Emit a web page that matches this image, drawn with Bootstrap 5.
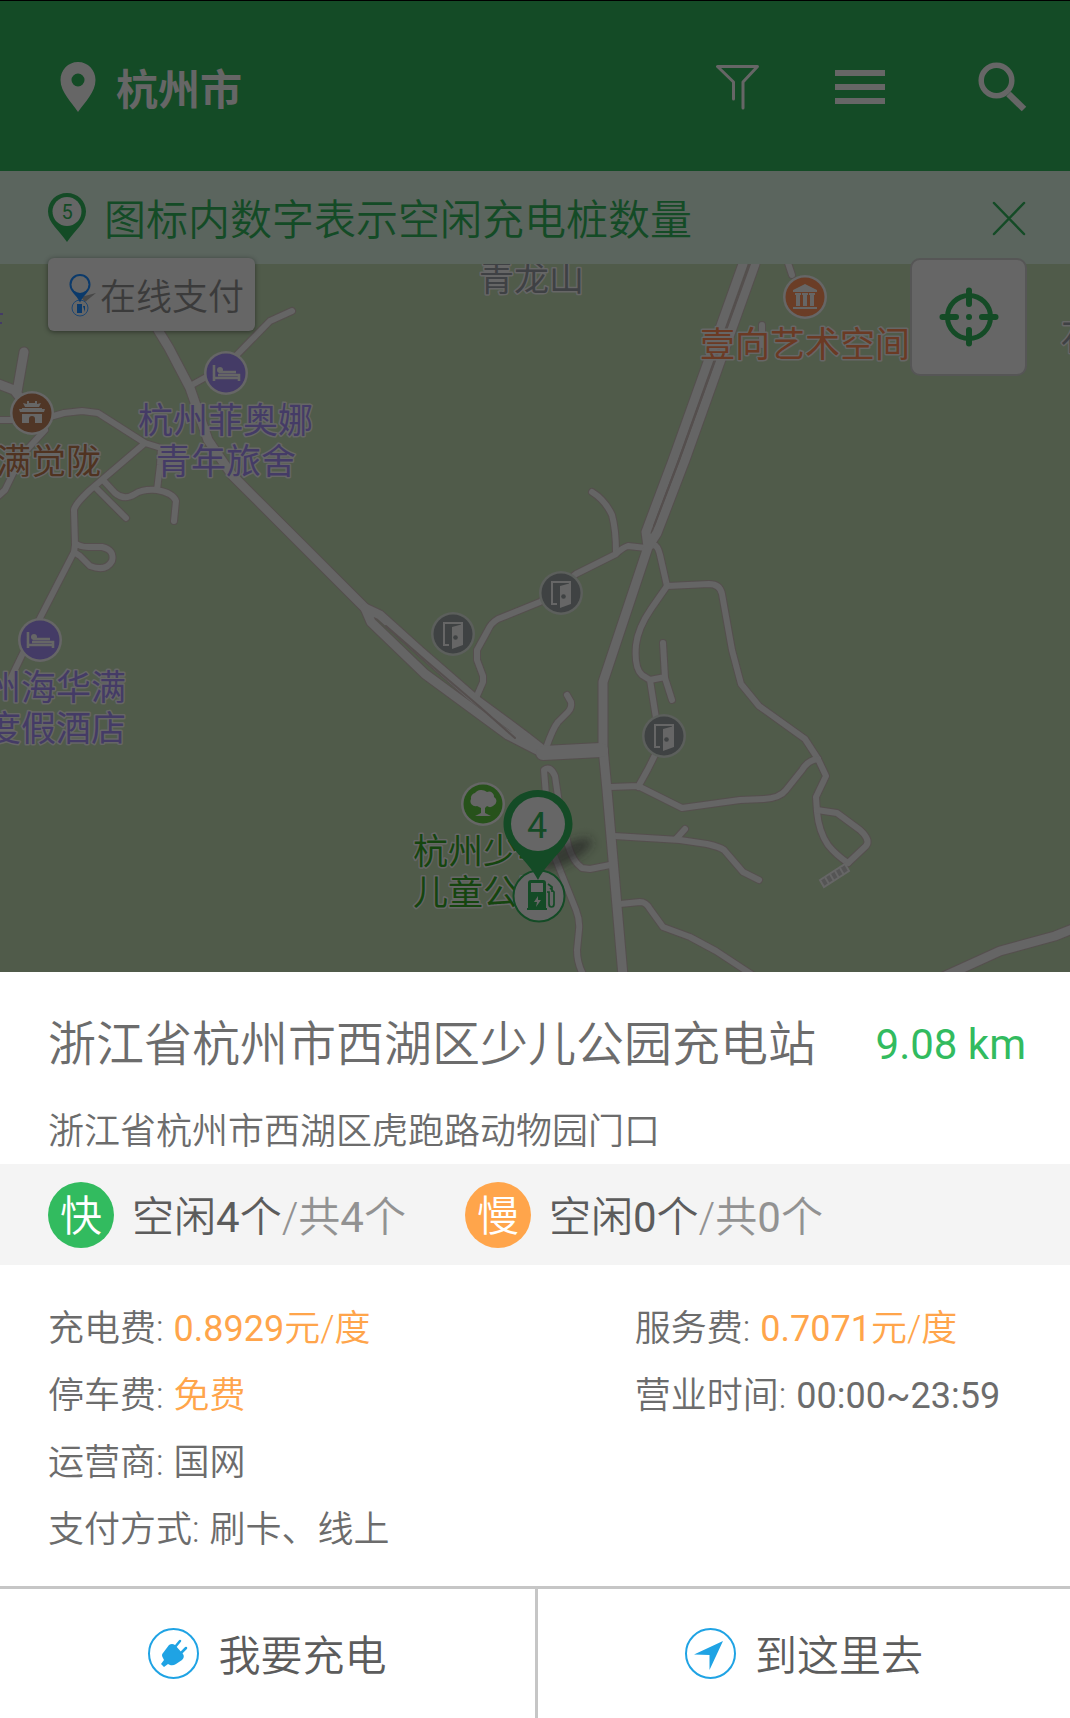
<!DOCTYPE html>
<html lang="zh-CN">
<head>
<meta charset="utf-8">
<meta name="viewport" content="width=device-width, initial-scale=1">
<title>充电站</title>
<link rel="stylesheet" href="https://cdn.jsdelivr.net/npm/bootstrap@5.3.0/dist/css/bootstrap.min.css">
<style>
  :root { --dim-green: #144b26; --dim-white: #666; --go: #32bb5f; --amber: #ffa54b; --edge-l: 48px; --edge-r: 44px; --text-weight: 350; }
  body { font-family: Roboto, "Noto Sans CJK SC", sans-serif; font-weight: var(--text-weight); font-size: 36px; color: #6c6c6c; background: #fff; line-height: 48px; }
  .latin { font-weight: 400; }
  .label-text { padding-top: 7px; }
  .plain-btn { background: none; border: 0; padding: 0; color: inherit; line-height: 1; }
  .plain-btn svg, .city svg { display: block; }
  .topbar { background: var(--dim-green); color: var(--dim-white); border-top: 1px solid #000; height: 171px; padding: 2px 43px 0 60px; }
  .city { font-size: 42px; font-weight: 700; gap: 20px; }
  .tools { gap: 76px; }
  .tools .find { margin-left: 17px; }
  .notice { background: #5b655e; color: var(--dim-green); height: 93px; padding: 0 var(--edge-r) 0 var(--edge-l); font-size: 42px; }
  .notice-text { gap: 18px; }
  .map-area { background: #505b4a; min-height: 400px; }
  .map-canvas { position: absolute; inset: 0; width: 100%; height: 100%; font-size: 35px; font-weight: 400; }
  .pay-chip { position: absolute; top: -6px; left: var(--edge-l); height: 73px; padding: 0 11px 0 21px; gap: 4px; font-size: 36px; font-weight: var(--text-weight); background: var(--dim-white); color: #3b3b3b; border: 0; border-radius: 6px; box-shadow: 0 1px 5px rgba(0,0,0,.45); }
  .locate { position: absolute; top: -6px; right: 43px; width: 117px; height: 118px; background: var(--dim-white); color: var(--dim-green); border: 2px solid #565656; border-radius: 10px; padding: 0; }
  .sheet-head { padding: 43px var(--edge-r) 8px var(--edge-l); }
  .station { font-size: 48px; font-weight: var(--text-weight); line-height: 60px; }
  .distance { font-size: 42px; line-height: 60px; color: var(--go); }
  .address { margin-top: 33px; }
  .piles { background: #f4f4f4; height: 101px; padding: 0 var(--edge-r) 0 var(--edge-l); gap: 59px; font-size: 42px; color: #5c5c5c; }
  .pile { gap: 18px; }
  .disc { width: 66px; height: 66px; line-height: 70px; border-radius: 50%; color: #fff; text-align: center; }
  .fast { background: var(--go); }
  .slow { background: var(--amber); }
  .total { color: #929292; }
  .facts { padding: 31px var(--edge-r) 22px var(--edge-l); line-height: 67px; }
  .facts-left { flex: 0 0 60%; }
  .facts dt, .facts dd { font-weight: var(--text-weight); margin: 0; }
  .facts dd.latin { font-weight: 400; }
  .facts dl > div { gap: 10px; }
  .price { color: var(--amber); }
  .actions { border-top: 3px solid #c6c6c6; height: 132px; }
  .act { flex: 0 0 50%; background: none; border: 0; font-size: 42px; font-weight: var(--text-weight); color: #5c5c5c; gap: 19px; }
  .act + .act { border-left: 3px solid #c6c6c6; }
</style>
<script src="https://cdn.jsdelivr.net/npm/bootstrap@5.3.0/dist/js/bootstrap.bundle.min.js"></script>
</head>
<body class="d-flex flex-column min-vh-100">

<header class="topbar d-flex align-items-center justify-content-between">
  <button type="button" class="plain-btn city d-flex align-items-center">
    <svg width="36" height="50" viewBox="0 0 36 50" fill="currentColor" aria-hidden="true"><path fill-rule="evenodd" d="M18 0C8 0 .5 8 .5 18c0 12 11 22 17.500 32C25 40 35.500 30 35.500 18 35.500 8 28 0 18 0zm0 11.500a6.500 6.500 0 1 1 0 13 6.500 6.500 0 0 1 0-13z"/></svg>
    <span class="label-text">杭州市</span>
  </button>
  <div class="tools d-flex align-items-center">
    <button type="button" class="plain-btn" aria-label="筛选">
      <svg width="43" height="50" viewBox="0 0 43 50" fill="none" stroke="currentColor" stroke-width="3" stroke-linecap="round" stroke-linejoin="round" aria-hidden="true"><path d="M17.500 37V20L1.500 4.500h40L27 20v26"/></svg>
    </button>
    <button type="button" class="plain-btn" aria-label="菜单">
      <svg width="50" height="34" viewBox="0 0 50 34" fill="currentColor" aria-hidden="true"><path d="M0 0h50v6H0zM0 14h50v6H0zM0 28h50v6H0z"/></svg>
    </button>
    <button type="button" class="plain-btn find" aria-label="搜索">
      <svg width="49" height="50" viewBox="0 0 49 50" fill="none" stroke="currentColor" aria-hidden="true"><circle cx="18.500" cy="18.500" r="15.300" stroke-width="5.500"/><path d="M30.500 32L46 47" stroke-width="6.500"/></svg>
    </button>
  </div>
</header>

<div class="notice d-flex align-items-center justify-content-between">
  <div class="notice-text d-flex align-items-center">
    <svg width="38" height="49" viewBox="0 0 38 49" aria-hidden="true"><path d="M19 0C8.500 0 0 8 0 18.500 0 30 11 37 19 49c8-12 19-19 19-30.500C38 8 29.500 0 19 0z" fill="#144b26"/><circle cx="19" cy="18.500" r="14.500" fill="#666"/><text x="19" y="26" text-anchor="middle" font-size="20" font-weight="400" fill="#144b26">5</text></svg>
    <span class="label-text">图标内数字表示空闲充电桩数量</span>
  </div>
  <button type="button" class="plain-btn" aria-label="关闭">
    <svg width="34" height="36" viewBox="0 0 34 36" fill="none" stroke="currentColor" stroke-width="2.500" stroke-linecap="round" aria-hidden="true"><path d="M2 3l30 31M32 3L2 34"/></svg>
  </button>
</div>

<main class="map-area position-relative flex-grow-1">
  <svg class="map-canvas" viewBox="0 264 1070 708" preserveAspectRatio="xMidYMid slice" role="img" aria-label="地图">
    <defs>
      <g id="small-roads">
        <path d="M592 492Q605 500 612 515Q616 530 616 552"/>
        <path d="M646 548L628 546Q622 548 616 554L576 574L540 602L498 619Q491 623 488 630L477 650V660L483 676V682L476 698"/>
        <path d="M567 695L571 702Q572 708 568 712L558 722Q553 728 546 748"/>
        <path d="M648 547L654 545Q658 546 660 555L667 586L709 584Q720 584 722 594L732 650L741 684L759 706L805 739L818 759L826 776L816 797L817 812Q819 832 828 845Q836 855 848 863"/>
        <path d="M817 810L837 813L860 830Q871 840 866 846L848 863"/>
        <path d="M667 586L651 609Q638 628 636 645Q634 668 642 675L650 680L665 677M663 643L665 678L672 700M650 680L656 718L664 736L652 761L648 769L638 787M610 787L638 786L682 808L740 800L764 799Q780 798 786 790L802 770Q808 760 818 759"/>
        <path d="M614 836L680 840L707 844Q720 847 724 850L743 872L759 880M676 839L685 829"/>
        <path d="M620 904L640 902Q646 902 650 909L663 927L690 937L716 951L754 976"/>
        <path d="M546 795L544 770Q550 765 555 776L560 810L568 845Q573 862 582 868L590 869L610 865M552 850L576 910Q580 920 579 930L577 950Q577 964 584 976"/>
        <path d="M292 311L270 321L226 366L190 386M50 417L64 413L82 411L98 413L145 443L161 448L160 465L157 490M145 443L90 490Q75 504 74 510L75 545L74 552L39 620L8 684M103 480L115 493Q124 501 135 494Q142 489 157 490Q173 493 176 501L174 521M95 487L126 518M75 543Q80 547 88 547H102Q115 550 112 561Q106 572 90 566L80 556L74 552M45 430L22 455L5 490L-5 499M-4 420H30M787 260L792 275M762 325V345"/>
      </g>
      <g id="big-roads">
        <path d="M158 330L169 348L190 388L208 440L232 475L365 608"/>
        <path d="M365 608L380 615L420 651L475 699L525 736L543 750M365 608L371 622L425 674L508 735L543 753"/>
        <path d="M743 264L673 460L646 532L648 547M755 264L685 460L657 533L648 547L603 682V748L607 790L623 976"/>
        <path d="M945 976L1000 951L1055 936L1075 928M24 352L17 392M-4 383L14 390L30 410"/>
      </g>
      <g id="bed-sign"><circle r="22" fill="#666"/><circle r="19.500" fill="#443b66"/><path d="M-12-8v16M-12 5h25M13 8V2H-8M-7-1h17" fill="none" stroke="#666" stroke-width="2.600"/><circle cx="-6" cy="-3" r="3" fill="#666"/></g>
      <g id="door-sign"><circle r="22" fill="#5c5f5c"/><circle r="19.500" fill="#3f4243"/><path d="M-4 11h-5v-22H9v4" fill="none" stroke="#666" stroke-width="2"/><path d="M-1-7L10-10V11L-1 15z" fill="#666"/><circle cx="2.500" cy="3.500" r="2.300" fill="#3f4243"/></g>
      <filter id="soft" x="-50%" y="-150%" width="200%" height="400%"><feGaussianBlur stdDeviation="5"/></filter>
    </defs>
    <g fill="none" stroke-linecap="round" stroke-linejoin="round">
      <g stroke="#554f4e"><use href="#small-roads" stroke-width="8"/><use href="#big-roads" stroke-width="11"/><path d="M543 753L601 750" stroke-width="16"/></g>
      <g stroke="#656565"><use href="#small-roads" stroke-width="6"/><use href="#big-roads" stroke-width="9"/><path d="M543 753L601 750" stroke-width="14"/></g>
      <path d="M750 264L679 460L654 526M386 626L425 660L480 707L515 738" stroke="#554f4e" stroke-width="2"/>
    </g>
    <path d="M820 880L845 864L849 871L824 887z" fill="#555" stroke="#666" stroke-width="2"/>
    <path d="M825 877l4 7M830 874l4 7M835 871l4 7M840 868l4 7" stroke="#666" stroke-width="2"/>
    <path d="M0 314h3M0 323h2" stroke="#443b66" stroke-width="2"/>

    <use href="#bed-sign" x="226" y="373"/>
    <use href="#bed-sign" x="40" y="640"/>
    <use href="#door-sign" x="453" y="634"/>
    <use href="#door-sign" x="561" y="593"/>
    <use href="#door-sign" x="664" y="736"/>
    <g transform="translate(32 413)"><circle r="22" fill="#666"/><circle r="19.500" fill="#503626"/><path d="M-9-10L-5-9V-12h2v2h6v-2h2v3l4-1-2 4H-7zM-13-4h26l-1 3H-12zM-10-5h20v2h-20zM-10 1h20v9H3V6A3 3 0 0 0-3 6v4h-7z" fill="#666"/></g>
    <g transform="translate(805 297)"><circle r="22" fill="#666"/><circle r="19.500" fill="#6b3d26"/><path d="M0-13L12-7v2h-24v-2zM-10-4h6v2h-1V9h-4V-2h-1zM-3-4h6v2H2V9h-4V-2h-1zM4-4h6v2H9V9H5V-2H4zM-12 10h24v2h-24z" fill="#666"/></g>
    <g transform="translate(483 804)"><circle r="22" fill="#666"/><circle r="19.500" fill="#27521b"/><path d="M-8 12l6-3V4l-4-2a5 5 0 0 1-6-7a5 5 0 0 1 4-6a7 5 0 0 1 12-1a5 5 0 0 1 7 5a5 5 0 0 1-1 9a5 5 0 0 1-6 0l-2 2v5l6 3z" fill="#666"/></g>

    <g paint-order="stroke" stroke="#666" stroke-width="3" stroke-linejoin="round">
      <g fill="#443b66">
        <text x="138" y="433">杭州菲奥娜</text><text x="156" y="474">青年旅舍</text>
        <text x="-14" y="700">州海华满</text><text x="-14" y="741">度假酒店</text>
      </g>
      <text x="-4" y="474" fill="#503321">满觉陇</text>
      <text x="479" y="291" fill="#3f4144">青龙山</text>
      <text x="700" y="357" fill="#6b3a24">壹向艺术空间</text>
      <text x="1061" y="350" fill="#3f4144">石</text>
      <g fill="#15450f"><text x="413" y="864">杭州少年</text><text x="413" y="905">儿童公园</text></g>
    </g>

    <ellipse cx="566" cy="854" rx="29" ry="9" transform="rotate(-28 566 854)" fill="#222" opacity=".6" filter="url(#soft)"/>
    <circle cx="539" cy="896" r="25.500" fill="#666" stroke="#144b26" stroke-width="2"/>
    <path fill="#144b26" fill-rule="evenodd" d="M531 880h12q3 0 3 3v25h1v2h-20v-2h1v-25q0-3 3-3zm0 3v9h12v-9zm7 13l-4 6h3l-1 5 5-7h-3z"/>
    <path d="M547 892h2v12q0 3 2.500 3t2.500-3v-12l-4-4M548 884l4 3v5" fill="none" stroke="#144b26" stroke-width="1.700"/>
    <path d="M538 790c-20 0-34.500 15-34.500 34 0 22 22.500 33 34.500 56 12-23 34.500-34 34.500-56 0-19-14.500-34-34.500-34z" fill="#144b26"/>
    <circle cx="538" cy="824" r="27" fill="#666"/>
    <text x="537" y="838" text-anchor="middle" font-size="36" fill="#144b26">4</text>
  </svg>

  <button type="button" class="pay-chip d-flex align-items-center">
    <svg width="27" height="44" viewBox="0 0 27 44" aria-hidden="true"><path d="M12 24l15-4-11 9z" fill="#333" opacity=".6"/><circle cx="11" cy="35" r="8" fill="none" stroke="#1c4672"/><path d="M8 31h5v9H8zM14 33h2v6" fill="#0b3a6b"/><path d="M11 1C5 1 .5 5.500 .5 11.500c0 7 7 10 10.500 18 3.500-8 10.500-11 10.500-18C21.500 5.500 17 1 11 1z" fill="#0b3a6b"/><circle cx="11" cy="11.500" r="8.500" fill="#666"/></svg>
    <span class="label-text">在线支付</span>
  </button>
  <button type="button" class="locate d-flex align-items-center justify-content-center" aria-label="定位">
    <svg width="60" height="60" viewBox="0 0 60 60" fill="none" stroke="currentColor" stroke-linecap="round" aria-hidden="true"><circle cx="30" cy="30" r="21.500" stroke-width="5"/><path d="M30 3.500V17M30 43v13.500M3.500 30H17M43 30h13.500M30 30h.01" stroke-width="6"/></svg>
  </button>
</main>

<section>
  <div class="sheet-head">
    <div class="d-flex justify-content-between align-items-center">
      <h1 class="station m-0">浙江省杭州市西湖区少儿公园充电站</h1>
      <span class="distance latin text-nowrap">9.08 km</span>
    </div>
    <p class="address mb-0">浙江省杭州市西湖区虎跑路动物园门口</p>
  </div>

  <div class="piles d-flex align-items-center">
    <div class="pile d-flex align-items-center"><span class="disc fast">快</span><span class="label-text">空闲<span class="latin">4</span>个<span class="total">/共<span class="latin">4</span>个</span></span></div>
    <div class="pile d-flex align-items-center"><span class="disc slow">慢</span><span class="label-text">空闲<span class="latin">0</span>个<span class="total">/共<span class="latin">0</span>个</span></span></div>
  </div>

  <div class="facts d-flex">
    <dl class="facts-left m-0">
      <div class="d-flex"><dt>充电费:</dt><dd class="price"><span class="latin">0.8929</span>元/度</dd></div>
      <div class="d-flex"><dt>停车费:</dt><dd class="price">免费</dd></div>
      <div class="d-flex"><dt>运营商:</dt><dd>国网</dd></div>
      <div class="d-flex"><dt>支付方式:</dt><dd>刷卡、线上</dd></div>
    </dl>
    <dl class="m-0 text-nowrap">
      <div class="d-flex"><dt>服务费:</dt><dd class="price"><span class="latin">0.7071</span>元/度</dd></div>
      <div class="d-flex"><dt>营业时间:</dt><dd class="latin">00:00~23:59</dd></div>
    </dl>
  </div>

  <div class="actions d-flex">
    <button type="button" class="act d-flex align-items-center justify-content-center">
      <svg width="51" height="51" viewBox="0 0 51 51" aria-hidden="true"><circle cx="25.500" cy="25.500" r="24.500" fill="none" stroke="#1fa3e4" stroke-width="2"/><path d="M21 17q3-2 6 0l8 9q2 3-1 6l-6 4q-3 2-6 1l-2-1-4 3-3-3 3-4-1-2q-2-3 0-5z" fill="#1fa3e4"/><path d="M27 19l5-6M33 25l5-5" stroke="#1fa3e4" stroke-width="2.500" stroke-linecap="round"/></svg>
      <span class="label-text">我要充电</span>
    </button>
    <button type="button" class="act d-flex align-items-center justify-content-center">
      <svg width="51" height="51" viewBox="0 0 51 51" aria-hidden="true"><circle cx="25.500" cy="25.500" r="24.500" fill="none" stroke="#1fa3e4" stroke-width="2"/><path d="M38 13L24.500 42V27L9 26.500z" fill="#1fa3e4"/></svg>
      <span class="label-text">到这里去</span>
    </button>
  </div>
</section>
</body>
</html>
